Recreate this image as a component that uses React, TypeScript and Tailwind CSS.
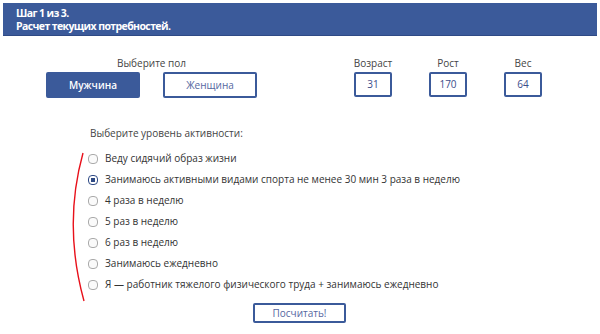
import {useState} from 'react';

const levels = [
  'Веду сидячий образ жизни',
  'Занимаюсь активными видами спорта не менее 30 мин 3 раза в неделю',
  '4 раза в неделю',
  '5 раз в неделю',
  '6 раз в неделю',
  'Занимаюсь ежедневно',
  'Я — работник тяжелого физического труда + занимаюсь ежедневно',
];

const params = [
  {label: 'Возраст', value: '31'},
  {label: 'Рост', value: '170'},
  {label: 'Вес', value: '64'},
];

export default function App() {
  const [gender, setGender] = useState('m');
  const [level, setLevel] = useState(1);

  return (
    <div className="relative w-[600px] h-[334px] bg-white font-['Open_Sans',sans-serif] text-[#333]">
      {/* header */}
      <div className="mx-[3px] mt-[3px] h-[33px] bg-[#3b5a9a] border-b border-[#2f4a85] px-[13px] pt-[4px] text-white font-bold text-[10.5px] tracking-[-0.6px] leading-[13px]">
        <div>Шаг 1 из 3.</div>
        <div>Расчет текущих потребностей.</div>
      </div>

      <div className="flex mt-[20px]">
        <div className="ml-[46px] flex flex-col">
          <div className="text-center text-[10px] leading-[14px] text-[#444]">Выберите пол</div>
          <div className="flex gap-[23px] mt-[2px]">
            <button
              onClick={() => setGender('m')}
              className={`w-[94px] h-[26px] rounded-[2px] border-2 border-[#3b5a9a] text-[10px] ${
                gender === 'm' ? 'bg-[#3b5a9a] text-white font-semibold' : 'bg-white text-[#55679f]'
              }`}
            >
              Мужчина
            </button>
            <button
              onClick={() => setGender('f')}
              className={`w-[94px] h-[26px] rounded-[2px] border-2 border-[#3b5a9a] text-[10px] ${
                gender === 'f' ? 'bg-[#3b5a9a] text-white font-semibold' : 'bg-white text-[#55679f]'
              }`}
            >
              Женщина
            </button>
          </div>
        </div>

        <div className="ml-[97px] flex gap-[37px]">
          {params.map(p => (
            <div key={p.label} className="flex flex-col items-center w-[38px]">
              <div className="text-[10px] leading-[14px] text-[#444] whitespace-nowrap">{p.label}</div>
              <div className="mt-[2px] w-[38px] h-[25px] border-2 border-[#3b5a9a] rounded-[2px] flex items-center justify-center text-[10px] text-[#3b4d8a]">
                {p.value}
              </div>
            </div>
          ))}
        </div>
      </div>

      <div className="ml-[90px] mt-[29px] text-[10px] leading-[13px] text-[#444]">
        Выберите уровень активности:
      </div>

      <div className="ml-[88px] mt-[8px] flex flex-col">
        {levels.map((t, i) => (
          <label key={i} className="flex items-center h-[21px] cursor-pointer" onClick={() => setLevel(i)}>
            <span
              className={`w-[10px] h-[10px] rounded-[4px] border flex items-center justify-center ${
                level === i ? 'border-[#2f4a85] border-[1.5px]' : 'border-[#aaa] bg-[#fafafa]'
              }`}
            >
              {level === i && <span className="w-[4px] h-[4px] bg-[#2f4a85]" />}
            </span>
            <span className="ml-[7px] text-[10px] text-[#333] whitespace-nowrap">{t}</span>
          </label>
        ))}
      </div>

      <div className="flex justify-center mt-[8px] pr-[1px]">
        <button className="w-[93px] h-[20px] border-2 border-[#3b5a9a] rounded-[2px] bg-white text-[10px] text-[#55679f]">
          Посчитать!
        </button>
      </div>

      <svg className="absolute left-0 top-0 pointer-events-none" width="600" height="334">
        <path d="M83 150 Q63 222 84 298" fill="none" stroke="#e8101a" strokeWidth="1.4" />
      </svg>
    </div>
  );
}
